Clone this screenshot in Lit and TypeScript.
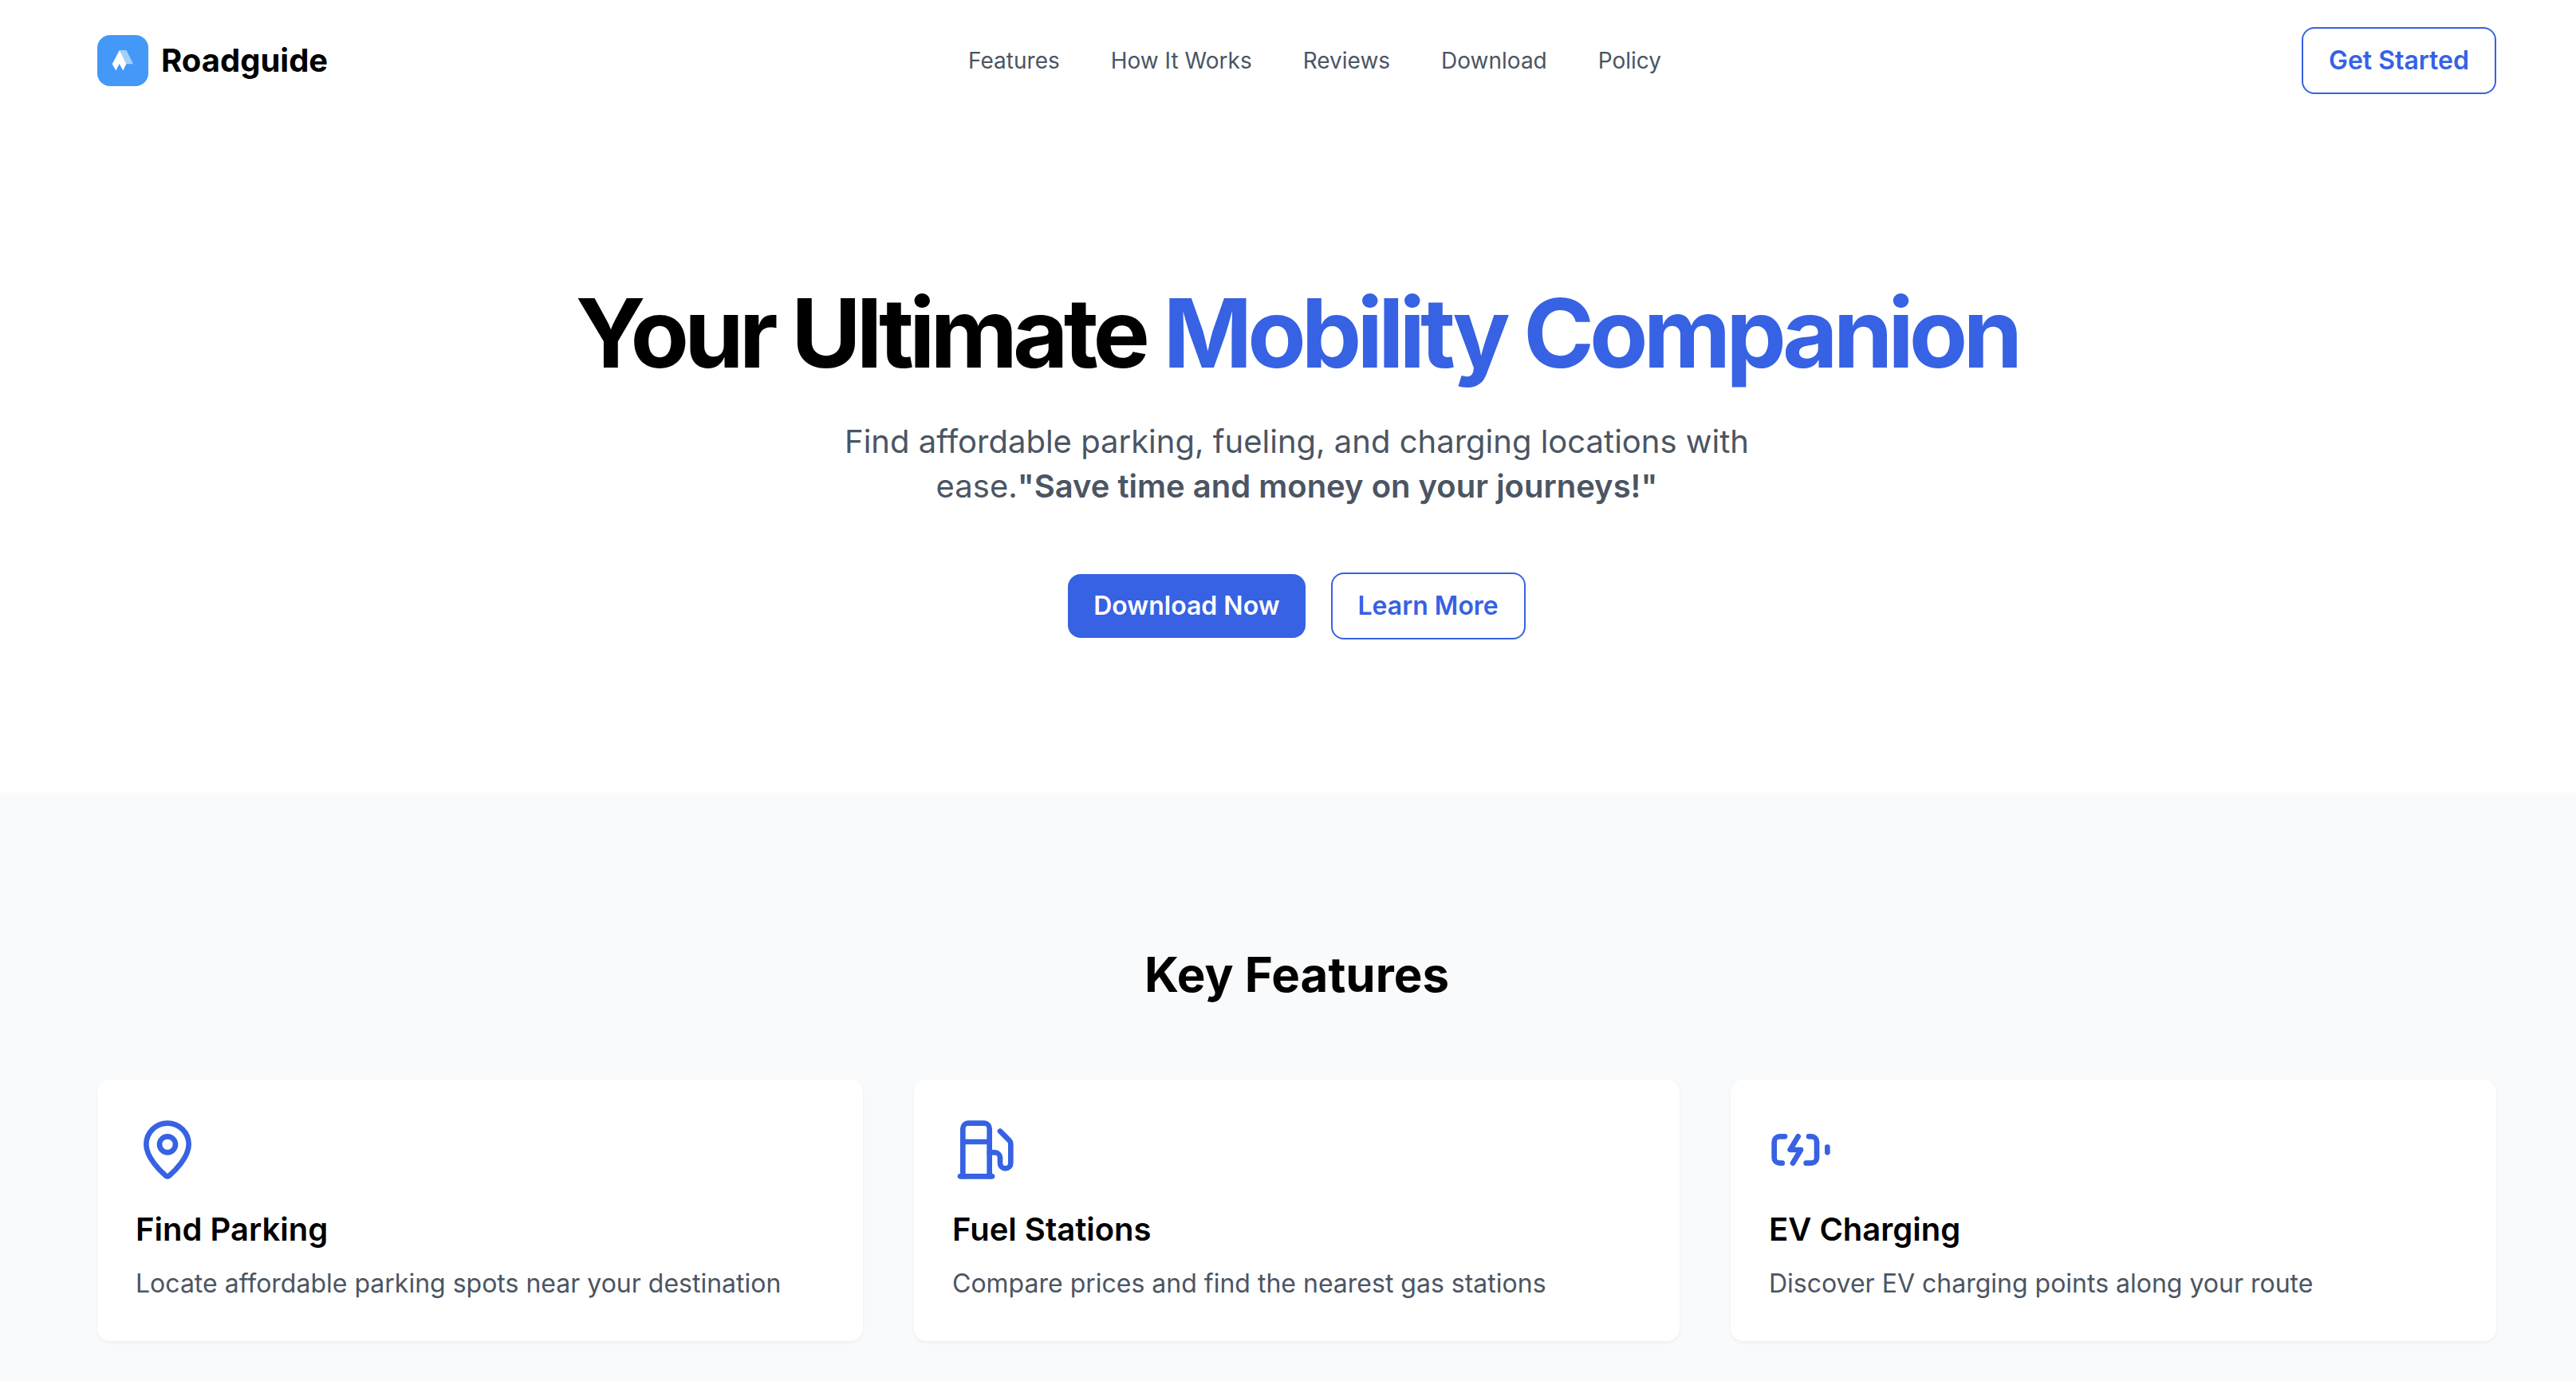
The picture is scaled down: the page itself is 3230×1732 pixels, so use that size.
import { LitElement, html, css, svg } from "lit";
import { customElement } from "lit/decorators.js";

const NAV_LINKS = [
  { label: "Features", href: "#features" },
  { label: "How It Works", href: "#how-it-works" },
  { label: "Reviews", href: "#reviews" },
  { label: "Download", href: "#download" },
  { label: "Policy", href: "#policy" },
];

const pinIcon = svg`
  <path d="M20 10c0 4.993-5.539 10.193-7.399 11.799a1 1 0 0 1-1.202 0C9.539 20.193 4 14.993 4 10a8 8 0 0 1 16 0"/>
  <circle cx="12" cy="10" r="3"/>`;

const fuelIcon = svg`
  <line x1="3" x2="15" y1="22" y2="22"/>
  <line x1="4" x2="14" y1="9" y2="9"/>
  <path d="M14 22V4a2 2 0 0 0-2-2H6a2 2 0 0 0-2 2v18"/>
  <path d="M14 13h2a2 2 0 0 1 2 2v2a2 2 0 0 0 2 2a2 2 0 0 0 2-2V9.83a2 2 0 0 0-.59-1.42L18 5"/>`;

const batteryIcon = svg`
  <path d="M15 7h1a2 2 0 0 1 2 2v6a2 2 0 0 1-2 2h-2"/>
  <path d="M6 7H4a2 2 0 0 0-2 2v6a2 2 0 0 0 2 2h1"/>
  <path d="m11 7-3 5h4l-3 5"/>
  <line x1="22" x2="22" y1="11" y2="13"/>`;

const FEATURES = [
  { icon: pinIcon, title: "Find Parking", text: "Locate affordable parking spots near your destination" },
  { icon: fuelIcon, title: "Fuel Stations", text: "Compare prices and find the nearest gas stations" },
  { icon: batteryIcon, title: "EV Charging", text: "Discover EV charging points along your route" },
];

@customElement("app-root")
export class AppRoot extends LitElement {
  static styles = css`
    :host {
      --blue: #3662e3;
      --slate: #4b5563;
      display: flex;
      flex-direction: column;
      min-height: 100vh;
      background: #fff;
      color: #000;
      font-family: Inter, "Liberation Sans", sans-serif;
      font-size: 32px;
      line-height: 48px;
    }
    * {
      box-sizing: border-box;
    }
    h1, h2, h3, p {
      margin: 0;
    }
    a {
      color: inherit;
      text-decoration: none;
    }
    .header, .hero, .features {
      padding-left: 122px;
      padding-right: 100px;
    }
    .header {
      display: flex;
      align-items: center;
      justify-content: space-between;
      padding-top: 34px;
      padding-bottom: 32px;
    }
    .brand {
      display: flex;
      align-items: center;
      gap: 16px;
      font-size: 40px;
      line-height: 56px;
      font-weight: 700;
    }
    .logo {
      display: block;
      width: 64px;
      height: 64px;
    }
    .nav {
      display: flex;
      gap: 64px;
      font-size: 28px;
      line-height: 40px;
      color: var(--slate);
    }
    .button {
      display: block;
      margin: 0;
      padding: 16px 32px;
      border: 0;
      border-radius: 16px;
      background: var(--blue);
      color: #fff;
      font: inherit;
      font-weight: 600;
      cursor: pointer;
    }
    .button.outline {
      border: 2px solid var(--blue);
      background: #fff;
      color: var(--blue);
    }
    .hero {
      display: flex;
      flex-direction: column;
      align-items: center;
      padding-top: 192px;
      padding-bottom: 192px;
      text-align: center;
    }
    .headline {
      font-size: 120px;
      line-height: 152px;
      font-weight: 700;
      letter-spacing: -0.05em;
    }
    .accent {
      color: var(--blue);
    }
    .lead {
      max-width: 1200px;
      margin-top: 32px;
      font-size: 40px;
      line-height: 56px;
      color: var(--slate);
    }
    .lead strong {
      font-weight: 600;
    }
    .actions {
      display: flex;
      align-items: center;
      gap: 32px;
      margin-top: 80px;
    }
    .features {
      flex: 1;
      padding-top: 192px;
      padding-bottom: 48px;
      background: #f9fafc;
    }
    .section-title {
      margin-bottom: 96px;
      font-size: 60px;
      line-height: 72px;
      font-weight: 700;
      text-align: center;
    }
    .cards {
      display: grid;
      grid-template-columns: repeat(3, 1fr);
      gap: 64px;
    }
    .card {
      padding: 48px;
      border-radius: 16px;
      background: #fff;
      box-shadow: 0 2px 4px rgba(0, 0, 0, 0.05);
    }
    .icon {
      display: block;
      width: 80px;
      height: 80px;
      margin-bottom: 32px;
      fill: none;
      stroke: var(--blue);
      stroke-width: 2;
      stroke-linecap: round;
      stroke-linejoin: round;
    }
    .card-title {
      margin-bottom: 16px;
      font-size: 40px;
      line-height: 56px;
      font-weight: 600;
    }
    .card-text {
      color: var(--slate);
    }
  `;

  render() {
    return html`
      <header class="header">
        <a class="brand" href="#home">
          <svg class="logo" viewBox="0 0 64 64" aria-hidden="true">
            <rect width="64" height="64" rx="16" fill="#4398f8" />
            <path d="M27.500 19H36.500L45 36.300H36Z" fill="#a2d0fb" />
            <path d="M27.800 19L36.300 36.300L32.300 44.500L27.700 36L23.300 44.500L18.700 36.300Z" fill="#fff" />
          </svg>
          <span>Roadguide</span>
        </a>
        <nav class="nav" aria-label="Main">
          ${NAV_LINKS.map((link) => html`<a href=${link.href}>${link.label}</a>`)}
        </nav>
        <button class="button outline" type="button">Get Started</button>
      </header>
      <main class="hero">
        <h1 class="headline">Your Ultimate <span class="accent">Mobility Companion</span></h1>
        <p class="lead">
          Find affordable parking, fueling, and charging locations with
          ease.<strong>"Save time and money on your journeys!"</strong>
        </p>
        <div class="actions">
          <button class="button" type="button">Download Now</button>
          <button class="button outline" type="button">Learn More</button>
        </div>
      </main>
      <section class="features" id="features">
        <h2 class="section-title">Key Features</h2>
        <div class="cards">
          ${FEATURES.map(
            (feature) => html`
              <article class="card">
                <svg class="icon" viewBox="0 0 24 24" aria-hidden="true">${feature.icon}</svg>
                <h3 class="card-title">${feature.title}</h3>
                <p class="card-text">${feature.text}</p>
              </article>
            `
          )}
        </div>
      </section>
    `;
  }
}
